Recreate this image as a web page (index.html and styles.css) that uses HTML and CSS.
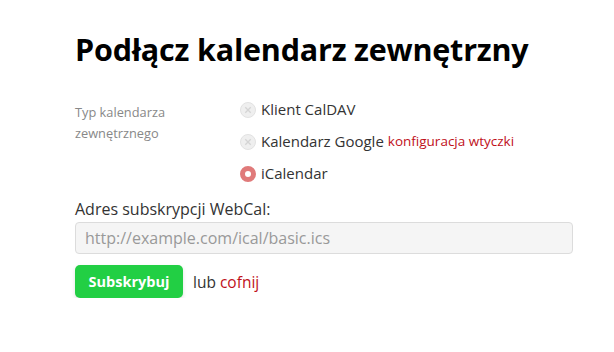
FILE: index.html
```html
<!DOCTYPE html>
<html lang="pl">
<head>
<meta charset="utf-8">
<link rel="stylesheet" href="styles.css">
</head>
<body>
<div class="page">
  <h1 class="title">Podłącz kalendarz zewnętrzny</h1>
  <div class="typerow">
    <div class="typelabel">Typ kalendarza<br>zewnętrznego</div>
    <div class="options">
      <div class="opt disabled"><span class="radio off"><svg width="16" height="16" viewBox="0 0 16 16"><circle cx="8" cy="8" r="7.5" fill="#efefef" stroke="#e2e2e2"/><path d="M5.3 5.3L10.7 10.7M10.7 5.3L5.3 10.7" stroke="#d4d4d4" stroke-width="1.3"/></svg></span>Klient CalDAV</div>
      <div class="opt disabled"><span class="radio off"><svg width="16" height="16" viewBox="0 0 16 16"><circle cx="8" cy="8" r="7.5" fill="#efefef" stroke="#e2e2e2"/><path d="M5.3 5.3L10.7 10.7M10.7 5.3L5.3 10.7" stroke="#d4d4d4" stroke-width="1.3"/></svg></span>Kalendarz Google <a class="link small" href="#">konfiguracja wtyczki</a></div>
      <div class="opt"><span class="radio on"><svg width="16" height="16" viewBox="0 0 16 16"><circle cx="8" cy="8" r="5.5" fill="none" stroke="#e07a7a" stroke-width="5"/></svg></span>iCalendar</div>
    </div>
  </div>
  <label class="fieldlabel">Adres subskrypcji WebCal:</label>
  <div class="input">http://example.com/ical/basic.ics</div>
  <div class="actions">
    <button class="btn">Subskrybuj</button>
    <span class="or">lub <a class="link" href="#">cofnij</a></span>
  </div>
</div>
</body>
</html>
```
FILE: styles.css
```css
html, body { margin: 0; padding: 0; background: #fff; }
body { font-family: "Open Sans", "Noto Sans", sans-serif; color: #333; }
.page { padding: 27px 40px 0 75px; }
.title { margin: 0; font-size: 30.5px; font-weight: 700; color: #000; line-height: 44px; letter-spacing: -0.2px; }
.typerow { display: flex; margin-top: 28px; }
.typelabel { width: 165px; font-size: 12.8px; color: #888; line-height: 21px; padding-top: 3px; }
.options { display: flex; flex-direction: column; gap: 11px; }
.opt { display: flex; align-items: center; font-size: 15px; line-height: 21px; color: #333; }
.radio { display: flex; width: 16px; height: 16px; margin-right: 5px; }
.link { color: #c0101a; text-decoration: none; }
.small { font-size: 13.5px; margin-left: 4px; }
.fieldlabel { display: block; margin-top: 14px; font-size: 16px; line-height: 22px; color: #333; }
.input { margin-top: 2px; width: 498px; height: 32px; box-sizing: border-box; border: 1px solid #dcdcdc; border-radius: 4px; background: #f5f5f5; color: #999; font-size: 16px; line-height: 30px; padding-left: 9px; }
.actions { display: flex; align-items: center; margin-top: 11px; }
.btn { background: #22cf44; color: #fff; border: none; border-radius: 5px; font-family: "Open Sans", sans-serif; font-weight: 700; font-size: 14.5px; height: 33px; width: 108px; padding: 0; box-shadow: 0 2px 4px rgba(0,0,0,0.12); }
.or { margin-left: 10px; font-size: 15.5px; color: #333; }
```
